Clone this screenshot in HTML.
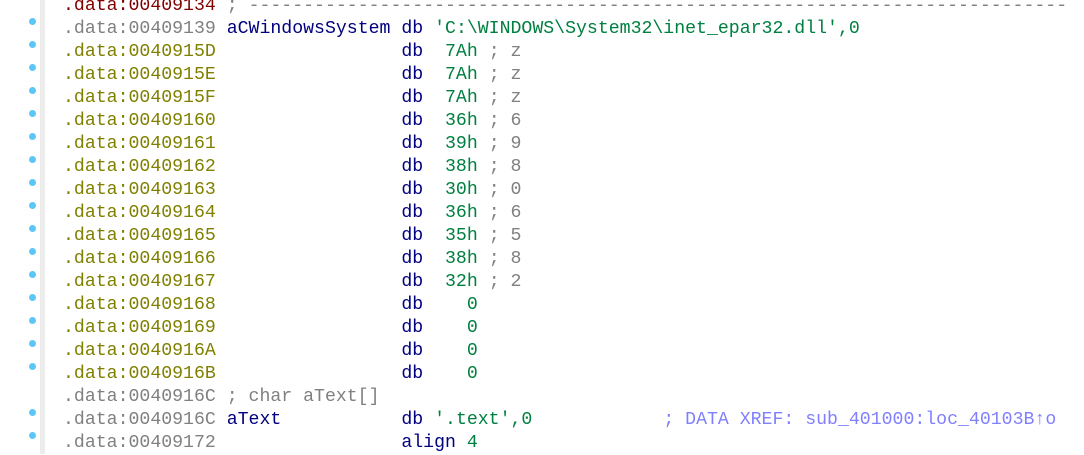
<!DOCTYPE html>
<html><head><meta charset="utf-8"><style>
body{margin:0;width:1084px;height:454px;background:#fff;overflow:hidden;position:relative;}
.bar{position:absolute;left:40px;top:0;width:5px;height:454px;background:#ececec;}
.dot{position:absolute;left:29px;width:7px;height:7px;border-radius:50%;background:#5cc6f7;}
pre{position:absolute;left:63px;top:-5px;margin:0;font-family:"Liberation Mono",monospace;font-size:18.2px;line-height:23px;white-space:pre;color:#000080;}
.a{color:#808000}.r{color:#800000}.g{color:#808080}.n{color:#008040}.x{color:#8080ff}
</style></head><body>
<div class="bar"></div>
<pre><span class="r">.data:00409134</span> <span class="g">; ---------------------------------------------------------------------------</span>
<span class="g">.data:00409139</span> aCWindowsSystem db <span class="n">'C:\WINDOWS\System32\inet_epar32.dll',0</span>
<span class="a">.data:0040915D</span>                 db  <span class="n">7Ah</span> <span class="g">; z</span>
<span class="a">.data:0040915E</span>                 db  <span class="n">7Ah</span> <span class="g">; z</span>
<span class="a">.data:0040915F</span>                 db  <span class="n">7Ah</span> <span class="g">; z</span>
<span class="a">.data:00409160</span>                 db  <span class="n">36h</span> <span class="g">; 6</span>
<span class="a">.data:00409161</span>                 db  <span class="n">39h</span> <span class="g">; 9</span>
<span class="a">.data:00409162</span>                 db  <span class="n">38h</span> <span class="g">; 8</span>
<span class="a">.data:00409163</span>                 db  <span class="n">30h</span> <span class="g">; 0</span>
<span class="a">.data:00409164</span>                 db  <span class="n">36h</span> <span class="g">; 6</span>
<span class="a">.data:00409165</span>                 db  <span class="n">35h</span> <span class="g">; 5</span>
<span class="a">.data:00409166</span>                 db  <span class="n">38h</span> <span class="g">; 8</span>
<span class="a">.data:00409167</span>                 db  <span class="n">32h</span> <span class="g">; 2</span>
<span class="a">.data:00409168</span>                 db    <span class="n">0</span>
<span class="a">.data:00409169</span>                 db    <span class="n">0</span>
<span class="a">.data:0040916A</span>                 db    <span class="n">0</span>
<span class="a">.data:0040916B</span>                 db    <span class="n">0</span>
<span class="g">.data:0040916C ; char aText[]</span>
<span class="g">.data:0040916C</span> aText           db <span class="n">'.text',0</span>            <span class="x">; DATA XREF: sub_401000:loc_40103B↑o</span>
<span class="g">.data:00409172</span>                 align <span class="n">4</span>
</pre>
<div class="dot" style="top:18px"></div>
<div class="dot" style="top:41px"></div>
<div class="dot" style="top:64px"></div>
<div class="dot" style="top:87px"></div>
<div class="dot" style="top:110px"></div>
<div class="dot" style="top:133px"></div>
<div class="dot" style="top:156px"></div>
<div class="dot" style="top:179px"></div>
<div class="dot" style="top:202px"></div>
<div class="dot" style="top:225px"></div>
<div class="dot" style="top:248px"></div>
<div class="dot" style="top:271px"></div>
<div class="dot" style="top:294px"></div>
<div class="dot" style="top:317px"></div>
<div class="dot" style="top:340px"></div>
<div class="dot" style="top:363px"></div>
<div class="dot" style="top:409px"></div>
<div class="dot" style="top:432px"></div>
</body></html>
